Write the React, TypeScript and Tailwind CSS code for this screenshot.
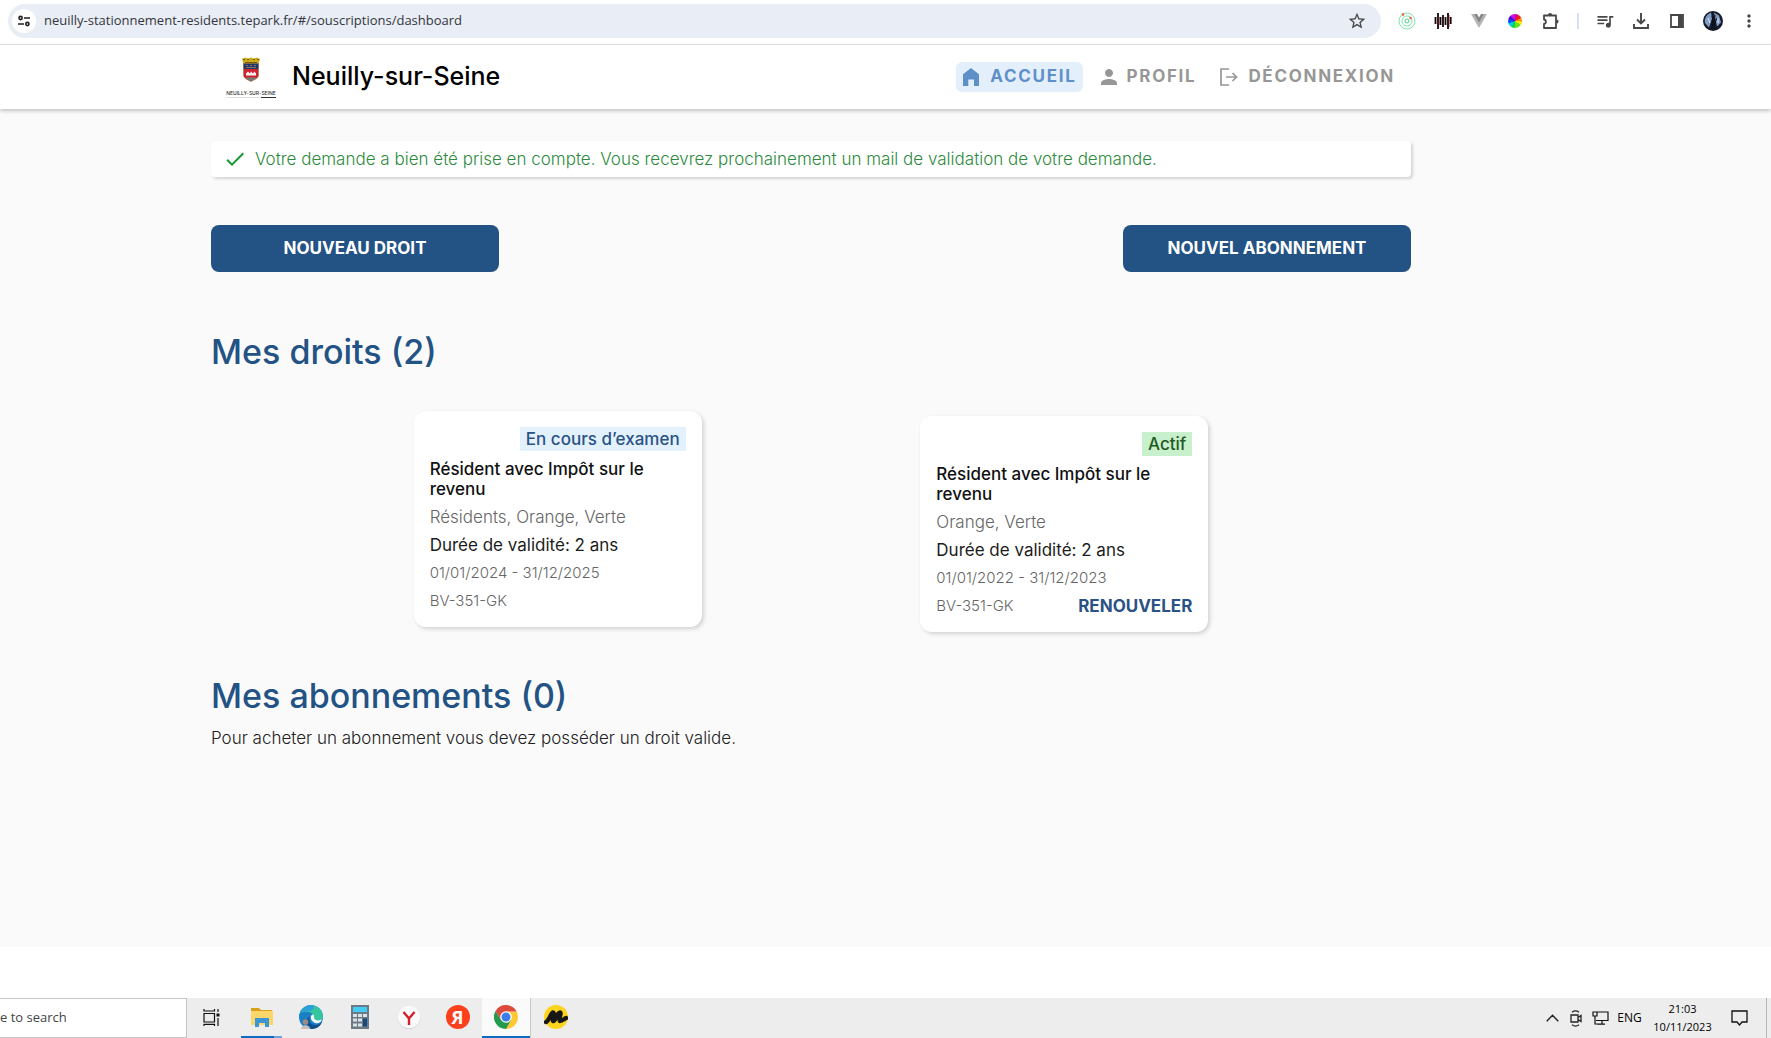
import type { ReactNode } from "react";
import { MdCheck, MdMoreVert, MdPerson, MdQueueMusic, MdStarOutline } from "react-icons/md";

function TuneIcon() {
  return (
    <svg viewBox="0 0 12 12" className="size-3" fill="none" stroke="#202124" strokeWidth="1.6">
      <circle cx="2.6" cy="3" r="1.6" />
      <path d="M6 3h6M0 9h6" />
      <circle cx="9.4" cy="9" r="1.6" />
    </svg>
  );
}

function RingsIcon() {
  return (
    <svg viewBox="0 0 18 18" className="size-[18px]" fill="none" stroke="#6fe0a0">
      <circle cx="9" cy="9" r="8" strokeWidth=".9" />
      <circle cx="9" cy="9" r="5" strokeWidth=".9" />
      <circle cx="9" cy="9" r="2" stroke="#4cc98c" />
      <circle cx="5" cy="2.6" r="1.3" fill="#e0663f" stroke="none" />
      <circle cx="12.6" cy="6" r="1.3" fill="#e0663f" stroke="none" />
    </svg>
  );
}

function WaveIcon() {
  return (
    <svg viewBox="0 0 18 18" className="size-[18px]" stroke="#150507" strokeWidth="1.8">
      <path d="M1.5 5v7M4 1v16M6.5 5v8M9 3v12M11.5 5v8M14 1v16M16.7 5v7" />
      <path d="M5.2 5v8M15.4 3v12" stroke="#a3202a" strokeWidth=".5" />
    </svg>
  );
}

function VueIcon() {
  return (
    <svg viewBox="0 0 16 14" className="h-3.5 w-4">
      <path d="M0 0h16L8 14z" fill="#b4b4b4" />
      <path d="M3.2 0h9.6L8 8.4z" fill="#858585" />
      <path d="M6 0h4L8 3.5z" fill="#fff" />
    </svg>
  );
}

function WheelIcon() {
  return (
    <div
      className="size-3.5 rounded-full bg-[conic-gradient(#e00078_0_30deg,#f0201c_30deg_65deg,#ff8a00_65deg_95deg,#ffe600_95deg_125deg,#6fe01a_125deg_180deg,#00d84a_180deg_215deg,#00d0e0_215deg_250deg,#0a50f0_250deg_285deg,#4a10e0_285deg_320deg,#c810e8_320deg)]"
      role="img"
      aria-label="Color wheel"
    />
  );
}

function PuzzleIcon() {
  return (
    <svg viewBox="0 0 18 18" className="size-[18px]" fill="none" stroke="#474747" strokeWidth="1.8" strokeLinejoin="round">
      <path d="M2 3.500h12v12.500H2v-4c2.500-.3 2.500-4.200 0-4.500z" />
      <path d="M6 3.200a2.100 2.100 0 0 1 4.200 0zM14.500 7.500a2.100 2.100 0 0 1 0 4.200z" fill="#474747" stroke="none" />
    </svg>
  );
}

function SidePanelIcon() {
  return (
    <svg viewBox="0 0 14 14" className="size-3.5">
      <path d="M1 1h12v12H1z" fill="none" stroke="#474747" strokeWidth="1.8" />
      <path d="M8 1h5v12H8z" fill="#474747" />
    </svg>
  );
}

function Avatar() {
  return (
    <svg viewBox="0 0 20 20" className="size-5">
      <circle cx="10" cy="10" r="10" fill="#151b28" />
      <path d="M2 12C1 7 4 3 8 1.500l1 6-3 9zM11 1.500l5 3 2 7-4 4z" fill="#7f9cc6" />
      <path d="M9 5l1 5-1 8M12 4l-1 9 1 6M14 7l-2 5" stroke="#0a0d14" strokeWidth="1" fill="none" />
      <path d="M5 7l2 5M15 7v5" stroke="#dfe9f7" strokeWidth="1" />
    </svg>
  );
}

function ToolbarButton({ label, children }: { label: string; children: ReactNode }) {
  return (
    <button aria-label={label} className="flex h-8 w-9 items-center justify-center text-[#474747]">
      {children}
    </button>
  );
}

function BrowserBar() {
  return (
    <div className="flex h-[45px] items-start border-b border-[#dfe1e5] bg-white pt-1 pr-1 pl-2">
      <form className="mr-2 flex h-[34px] min-w-0 flex-1 items-center rounded-full bg-[#e9edf6] pr-3.5 pl-1">
        <button
          type="button"
          aria-label="Site information"
          className="flex size-6 items-center justify-center rounded-full bg-white"
        >
          <TuneIcon />
        </button>
        <input
          aria-label="Address"
          defaultValue="neuilly-stationnement-residents.tepark.fr/#/souscriptions/dashboard"
          className="ml-2 min-w-0 flex-1 bg-transparent font-['Open_Sans',sans-serif] text-[13px] text-[#33363b] outline-none"
        />
        <button type="button" aria-label="Bookmark" className="text-[#474747]">
          <MdStarOutline size={20} />
        </button>
      </form>
      <div className="flex h-[34px] items-center">
        <ToolbarButton label="Rings">
          <RingsIcon />
        </ToolbarButton>
        <ToolbarButton label="Audio">
          <WaveIcon />
        </ToolbarButton>
        <ToolbarButton label="Vue">
          <VueIcon />
        </ToolbarButton>
        <ToolbarButton label="Colors">
          <WheelIcon />
        </ToolbarButton>
        <ToolbarButton label="Extensions">
          <PuzzleIcon />
        </ToolbarButton>
        <div className="mx-2 h-4 w-0.5 bg-[#d5e1f8]" />
        <ToolbarButton label="Media">
          <MdQueueMusic size={20} />
        </ToolbarButton>
        <ToolbarButton label="Downloads">
          <svg viewBox="0 0 16 16" className="size-4" fill="none" stroke="#474747" strokeWidth="1.9">
            <path d="M8 0v10M4 6.5l4 4 4-4M1 11v4h14v-4" />
          </svg>
        </ToolbarButton>
        <ToolbarButton label="Side panel">
          <SidePanelIcon />
        </ToolbarButton>
        <ToolbarButton label="Account">
          <Avatar />
        </ToolbarButton>
        <ToolbarButton label="Menu">
          <MdMoreVert size={20} />
        </ToolbarButton>
      </div>
    </div>
  );
}

function TownLogo() {
  return (
    <div className="flex w-[50px] flex-col items-center">
      <svg viewBox="0 0 20 26" className="h-[26px] w-5">
        <path d="M1 2l3-1.500 3 1 3-1 3 1 3-1L19 2l-1.500 5h-15z" fill="#cdaa18" />
        <path d="M2 2.500h2M6 2.500h2M12 2.500h2M16 2.500h2M4 5.500h12" stroke="#5d4a0c" strokeWidth=".8" />
        <path d="M2.500 6.500h15V18c0 3.500-4 4.500-7.500 6.500C6.500 22.500 2.500 21.500 2.500 18z" fill="#cf2430" />
        <path d="M2.500 6.500h15V12h-15z" fill="#24356e" />
        <path d="M5 8.500h2M9 8.500h2M13 8.500h2M5 10.500h10" stroke="#a99a58" strokeWidth=".7" />
        <path d="M5 18.500v-2l2-2 2 2 1-2 2 2 1.500-2 1.500 2v2z" fill="#fbeff0" />
        <path d="M4 20.500h12l-2 1.500-4 2.500-4-2.500z" fill="#777b7c" />
        <path
          d="M2.500 6.500h15V18c0 3.500-4 4.500-7.500 6.500C6.500 22.500 2.500 21.500 2.500 18z"
          fill="none"
          stroke="#8c7a45"
          strokeWidth=".6"
        />
      </svg>
      <span className="mt-1.5 flex text-[5px] leading-[8px] font-medium whitespace-nowrap text-[#333]">
        <span className="border-b border-[#e2e2e2]">NEUILLY-SUR-</span>
        <span className="border-b border-[#333]">SEINE</span>
      </span>
    </div>
  );
}

function NavLink({ icon, label, active = false }: { icon: ReactNode; label: string; active?: boolean }) {
  return (
    <a
      href="#"
      className={
        "flex h-[30px] items-center gap-2.5 rounded-md px-1.5 text-[17px] font-bold tracking-widest " +
        (active ? "bg-[#e3f0fc] text-[#5f8fc9]" : "text-[#979797]")
      }
    >
      {icon}
      <span>{label}</span>
    </a>
  );
}

function Header() {
  return (
    <header className="relative h-16 bg-white pl-[211px] shadow-[0_2px_4px_rgba(0,0,0,0.22)]">
      <div className="flex h-full max-w-[1200px] items-center justify-between pr-2.5 pl-[15px]">
        <div className="flex items-center gap-4">
          <TownLogo />
          <span className="text-[25px] font-medium text-black">Neuilly-sur-Seine</span>
        </div>
        <nav className="flex items-center gap-3">
          <NavLink
            active
            label="ACCUEIL"
            icon={
              <svg viewBox="0 0 18 18" className="size-[18px]" fill="currentColor">
                <path d="M1 6.300L9 0l8 6.300V18h-5v-6.500H6.300V18H1z" />
              </svg>
            }
          />
          <NavLink label="PROFIL" icon={<MdPerson size={24} className="-mx-1" />} />
          <NavLink
            label="DÉCONNEXION"
            icon={
              <svg viewBox="0 0 18 18" className="size-[18px]" fill="none" stroke="currentColor" strokeWidth="1.7">
                <path d="M9 1H1v16h8M6 9h10.500M12.500 5l4 4-4 4" />
              </svg>
            }
          />
        </nav>
      </div>
    </header>
  );
}

type Right = {
  status: string;
  statusClass: string;
  zones: string;
  dates: string;
  renewable: boolean;
  alignClass: string;
};

const rights: Right[] = [
  {
    status: "En cours d’examen",
    statusClass: "bg-[#e3f1fd] text-[#2a5285]",
    zones: "Résidents, Orange, Verte",
    dates: "01/01/2024 - 31/12/2025",
    renewable: false,
    alignClass: "self-start",
  },
  {
    status: "Actif",
    statusClass: "bg-[#c8f0cc] text-[#1f5a20]",
    zones: "Orange, Verte",
    dates: "01/01/2022 - 31/12/2023",
    renewable: true,
    alignClass: "self-end",
  },
];

function RightCard({ right }: { right: Right }) {
  return (
    <article
      className={
        "mx-4 flex w-72 flex-col gap-2 rounded-xl bg-white p-4 text-[17px] leading-5 shadow-[2px_2px_4px_rgba(0,0,0,0.16)] " +
        right.alignClass
      }
    >
      <span className={"self-end px-1.5 leading-6 font-medium " + right.statusClass}>{right.status}</span>
      <h2 className="font-medium text-[#111]">Résident avec Impôt sur le revenu</h2>
      <p className="font-light text-[#666]">{right.zones}</p>
      <p className="text-[#1c1c1c]">Durée de validité: 2 ans</p>
      <p className="text-[15px] leading-5 font-light text-[#666]">{right.dates}</p>
      <div className="flex items-center justify-between">
        <p className="text-[15px] leading-5 font-light text-[#666]">BV-351-GK</p>
        {right.renewable && <button className="font-bold text-[#2a5285]">RENOUVELER</button>}
      </div>
    </article>
  );
}

function Dashboard() {
  return (
    <main className="h-[838px] bg-[#fafafa] pt-8 pl-[211px]">
      <div className="max-w-[1200px]">
        <div
          role="status"
          className="flex h-9 items-center gap-2 rounded-sm bg-white px-3 text-[17px] leading-5 font-light text-[#2e8b3e] shadow-[2px_2px_3px_rgba(0,0,0,0.15)]"
        >
          <MdCheck size={24} className="text-[#159a35]" />
          <span>
            Votre demande a bien été prise en compte. Vous recevrez prochainement un mail de validation de votre demande.
          </span>
        </div>
        <div className="mt-12 flex justify-between">
          <button className="h-[47px] w-72 rounded-lg bg-[#235284] text-[17px] font-bold text-white">
            NOUVEAU DROIT
          </button>
          <button className="h-[47px] w-72 rounded-lg bg-[#235284] text-[17px] font-bold text-white">
            NOUVEL ABONNEMENT
          </button>
        </div>
        <h1 className="mt-[60px] text-[34px] leading-10 font-medium text-[#235284]">Mes droits (2)</h1>
        <div className="mt-[39px] flex h-[221px] justify-evenly">
          {rights.map((right) => (
            <RightCard key={right.status} right={right} />
          ))}
        </div>
        <h1 className="mt-11 text-[34px] leading-10 font-medium text-[#235284]">Mes abonnements (0)</h1>
        <p className="mt-2.5 text-[17px] leading-6 font-light text-[#222]">
          Pour acheter un abonnement vous devez posséder un droit valide.
        </p>
      </div>
    </main>
  );
}

function TaskButton({ label, stateClass = "", children }: { label: string; stateClass?: string; children: ReactNode }) {
  return (
    <button
      aria-label={label}
      className={"relative flex h-full w-[49px] items-center justify-center pb-0.5 " + stateClass}
    >
      {children}
    </button>
  );
}

function Taskbar() {
  return (
    <footer className="flex h-10 items-stretch bg-[#ededed] font-['Open_Sans',sans-serif] text-xs text-black">
      <label className="flex w-[187px] items-center border border-l-0 border-[#c4c4c4] bg-white">
        <input
          aria-label="Search"
          placeholder="e to search"
          className="w-full bg-transparent text-[13px] outline-none placeholder:text-[#444]"
        />
      </label>
      <TaskButton label="Task view">
        <svg viewBox="0 0 17 17" className="size-[17px]" fill="none" stroke="#111" strokeWidth="1.200">
          <path d="M1 4.500h10.500v8.500H1zM1 0v2h10.500V0M1 17v-1.700h10.500V17M15 0v3M15 9v8" />
          <path d="M13.500 4.500h3v3h-3z" fill="#111" stroke="none" />
        </svg>
      </TaskButton>
      <div className="ml-px flex">
        <TaskButton label="File Explorer">
          <svg viewBox="0 0 22 20" className="h-5 w-[22px]">
            <path d="M0 1h8l2 2h11v4H0z" fill="#d9a01c" />
            <path d="M0 4h22v14H0z" fill="#fcd66a" />
            <path d="M4 20v-9h14v9h-4v-4H8v4z" fill="#3a97d3" />
          </svg>
          <span className="absolute inset-x-1 bottom-0 h-0.5 border-r-8 border-[#6ea6dc] bg-[#0c6cc4]" />
        </TaskButton>
        <TaskButton label="Edge">
          <svg viewBox="0 0 24 24" className="size-6">
            <circle cx="12" cy="12" r="12" fill="#1a7fc4" />
            <path d="M1 8C4 1 11-1 16 1c6 2 8 7 8 11-1 4-5 5-8 4-2-1-1-2-1-4 0-4-6-7-14-4z" fill="#35c6a0" />
            <path d="M1 8C3 3 7 0 12 0c5 1 3 5-1 6-4 0-7 0-10 2z" fill="#2d9fd9" />
            <path d="M11 11c-2 4 0 9 5 9 3 0 5-1 7-3-2 5-6 7-11 7-4-2-7-9-1-13z" fill="#12508f" />
            <path d="M12 11c1-2 3-2 3 0s0 3 2 4c2 1 5 0 6-1-1 4-4 5-7 4-3-1-5-4-4-7z" fill="#f3f6f7" />
            <circle cx="6.500" cy="17" r="2.800" fill="#9a8c84" />
            <path d="M2 24c0-5 9-5 9 0z" fill="#c8bfb8" />
          </svg>
        </TaskButton>
        <TaskButton label="Calculator">
          <svg viewBox="0 0 18 24" className="h-6 w-[18px]">
            <path d="M0 0h18v24H0z" fill="#6d7a85" />
            <path d="M2 2h14v5H2z" fill="#43cdf5" />
            <path d="M2 9h4v3H2zM7 9h4v3H7zM12 9h4v3h-4zM2 13.500h4v3H2zM7 13.500h4v3H7zM2 18.500h4v3H2zM7 18.500h4v3H7z" fill="#dbe3e8" />
            <path d="M12 13.500h4v8h-4z" fill="#174a7c" />
          </svg>
        </TaskButton>
        <TaskButton label="Yandex Browser">
          <svg viewBox="0 0 24 24" className="size-6">
            <circle cx="12" cy="12.500" r="11.500" fill="#cfcfcf" />
            <circle cx="12" cy="12" r="11.300" fill="#fafafa" />
            <path d="M6.500 7l5.500 6.500L17.500 7M12 13v7" fill="none" stroke="#d3202a" strokeWidth="2.400" />
          </svg>
        </TaskButton>
        <TaskButton label="Yandex">
          <span className="flex size-6 items-center justify-center rounded-full bg-[#fc3f1d] text-lg leading-6 font-bold text-white">
            Я
          </span>
        </TaskButton>
        <TaskButton label="Chrome" stateClass="bg-[#fafafa] border-r border-[#c8c8c8]">
          <svg viewBox="0 0 24 24" className="size-6">
            <path d="M12 12V6.500h10.600A12 12 0 0 1 12 24z" fill="#fcc934" />
            <path d="M1.600 6A12 12 0 0 0 12 24l5-9-5-3-4.800 3z" fill="#239a4c" />
            <path d="M1.600 6A12 12 0 0 1 22.600 6.500H12L7.200 15z" fill="#dd4b3e" />
            <circle cx="12" cy="12" r="5.800" fill="#fff" />
            <circle cx="12" cy="12" r="4.500" fill="#3b7de9" />
          </svg>
          <span className="absolute inset-x-0 bottom-0 h-0.5 bg-[#0c6cc4]" />
        </TaskButton>
        <TaskButton label="Miro">
          <svg viewBox="0 0 24 24" className="size-6">
            <circle cx="12" cy="12" r="12" fill="#fdd41c" />
            <path
              d="M2 17C5 16 7 8 9 7.500c2 0-1 7.500 0 8.500 2 1 4-8.500 7-8.500 2 0-2 7.500 0 8.500 2 0 4-2 6-3"
              fill="none"
              stroke="#161616"
              strokeWidth="4.400"
              strokeLinejoin="round"
              strokeLinecap="round"
            />
          </svg>
        </TaskButton>
      </div>
      <div className="flex-1" />
      <div className="flex items-center">
        <button aria-label="Show hidden icons" className="flex w-6 justify-center">
          <svg viewBox="0 0 13 8" className="h-2 w-[13px]" fill="none" stroke="#222" strokeWidth="1.400">
            <path d="M.7 7.300l5.800-6 5.800 6" />
          </svg>
        </button>
        <button aria-label="Meet now" className="flex w-6 justify-center">
          <svg viewBox="0 0 12 17" className="h-[17px] w-3" fill="none" stroke="#222" strokeWidth="1.300">
            <path d="M1 5h7v7H1zM8 7.500l3-2v6l-3-2M2 2.200C4 .7 7 .7 9 2.200M2 14.800c2 1.500 5 1.500 7 0" />
          </svg>
        </button>
        <button aria-label="Network" className="flex w-6 justify-center">
          <svg viewBox="0 0 17 14" className="h-3.5 w-[17px]" fill="none" stroke="#111" strokeWidth="1.200">
            <path d="M5 1h11v8.500H4M10 9.500V13M5.500 13.200H13M1 1h4v4H1zM3 5v8h3" />
          </svg>
        </button>
        <button className="w-[35px] text-center">ENG</button>
        <button className="w-[71px] text-center text-[11px] leading-[18px]">
          21:03
          <br />
          10/11/2023
        </button>
        <button aria-label="Notifications" className="flex w-[42px] justify-center">
          <svg viewBox="0 0 17 16" className="h-4 w-[17px]" fill="none" stroke="#111" strokeWidth="1.300">
            <path d="M1 1h15v11h-5l-2.500 3L6 12H1z" />
          </svg>
        </button>
        <button aria-label="Show desktop" className="ml-1.5 h-10 w-[5px] border-l border-[#b5b5b5]" />
      </div>
    </footer>
  );
}

export default function App() {
  return (
    <div className="flex min-h-screen flex-col bg-white font-['Inter',sans-serif]">
      <BrowserBar />
      <Header />
      <Dashboard />
      <div className="flex-1" />
      <Taskbar />
    </div>
  );
}
